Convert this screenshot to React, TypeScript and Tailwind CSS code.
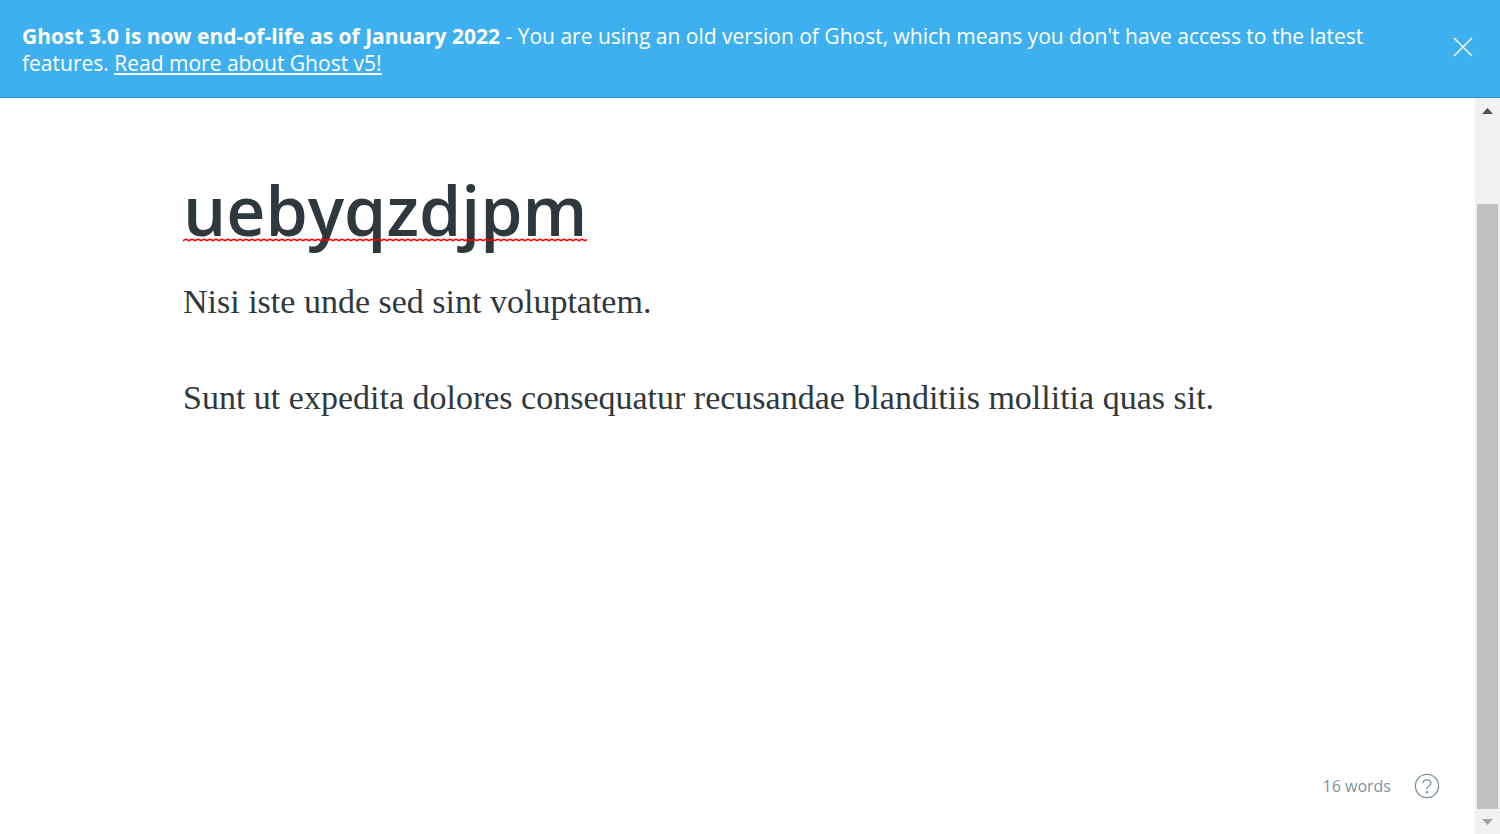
import { useState } from "react";

function Banner({ onClose }: { onClose: () => void }) {
  return (
    <aside className="flex items-start justify-between border-b border-[#1e98e4] bg-[#3eb0ef] px-[22px] pt-[23px] pb-5 text-white">
      <p className="max-w-[1360px] text-[21px] leading-[27px]">
        <strong className="font-bold">Ghost 3.0 is now end-of-life as of January 2022</strong>
        {" - You are using an old version of Ghost, which means you don't have access to the latest features. "}
        <a href="#v5" className="underline decoration-2 underline-offset-2">
          Read more about Ghost v5!
        </a>
      </p>
      <button type="button" aria-label="Close" onClick={onClose} className="mt-[9px] p-[5px]">
        <svg viewBox="0 0 20 20" className="size-5" fill="none" stroke="currentColor" strokeWidth="1.4">
          <path d="M1 1 19 19M19 1 1 19" />
        </svg>
      </button>
    </aside>
  );
}

function Misspelled({ children }: { children: string }) {
  return (
    <span className="relative inline-block">
      {children}
      <svg className="pointer-events-none absolute bottom-3 left-0 h-1 w-full" aria-hidden="true">
        <defs>
          <pattern id="squiggle" width="6" height="4" patternUnits="userSpaceOnUse">
            <path d="M-3 1.200C-1.500 1.200-1.500 2.500 0 2.500S1.500 1.200 3 1.200 4.500 2.500 6 2.500 7.500 1.200 9 1.200" fill="none" stroke="#f00" strokeWidth="1.500" />
          </pattern>
        </defs>
        <rect width="100%" height="4" fill="url(#squiggle)" />
      </svg>
    </span>
  );
}

function Scrollbar() {
  return (
    <div className="flex w-[25px] shrink-0 flex-col bg-[#f1f1f1] px-0.5">
      <button type="button" aria-label="Scroll up" className="flex h-[25px] items-center justify-center">
        <svg viewBox="0 0 11 6" className="h-[6px] w-[11px]" fill="#505050">
          <path d="M0 6 5.500 0 11 6z" />
        </svg>
      </button>
      <div className="flex flex-1 flex-col pt-[81px]">
        <div className="flex-1 bg-[#c1c1c1]" />
      </div>
      <button type="button" aria-label="Scroll down" className="flex h-[25px] items-center justify-center">
        <svg viewBox="0 0 11 6" className="h-[6px] w-[11px]" fill="#a3a3a3">
          <path d="M0 0 5.500 6 11 0z" />
        </svg>
      </button>
    </div>
  );
}

export default function App() {
  const [open, setOpen] = useState(true);
  return (
    <div className="flex min-h-screen flex-col bg-white font-['Open_Sans',sans-serif]">
      {open && <Banner onClose={() => setOpen(false)} />}
      <div className="flex flex-1">
        <main className="flex flex-1 flex-col">
          <article className="flex-1 px-[183px] pt-[68px] text-[#2e383d]">
            <h1
              contentEditable
              suppressContentEditableWarning
              spellCheck={false}
              className="text-[68px] leading-[88px] font-semibold outline-none"
            >
              <Misspelled>uebyqzdjpm</Misspelled>
            </h1>
            <div
              contentEditable
              suppressContentEditableWarning
              spellCheck={false}
              className="mt-6 flex flex-col gap-12 font-['Liberation_Serif',serif] text-[34px] leading-[48px] outline-none"
            >
              <p>Nisi iste unde sed sint voluptatem.</p>
              <p>Sunt ut expedita dolores consequatur recusandae blanditiis mollitia quas sit.</p>
            </div>
          </article>
          <footer className="flex items-center justify-end gap-[23px] pr-[35px] pb-[35px] text-[16px] leading-[26px] text-[#7c939e]">
            <span>16 words</span>
            <a href="#help" aria-label="Help">
              <svg viewBox="0 0 26 26" className="size-[26px]" fill="none" stroke="currentColor" strokeWidth="1.3">
                <circle cx="13" cy="13" r="11.600" />
                <path d="M9 10.200C9 7.900 10.800 6.800 13 6.800S17 8.100 17 10.200C17 12.800 13 12.900 13 16.200" />
                <circle cx="13" cy="19.200" r=".6" fill="currentColor" />
              </svg>
            </a>
          </footer>
        </main>
        <Scrollbar />
      </div>
    </div>
  );
}
